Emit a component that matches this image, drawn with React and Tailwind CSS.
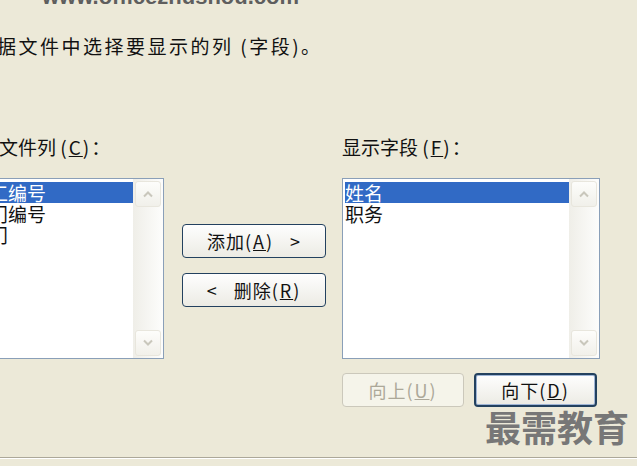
import React from 'react';

const cjk = "font-['Noto_Sans_CJK_SC','Noto_Sans',sans-serif]";

const leftItems = ['员工编号', '部门编号', '部门'];
const rightItems = ['姓名', '职务'];

function Chevron({ up }) {
  return (
    <svg width="12" height="8" viewBox="0 0 12 8" className="block">
      <path
        d={up ? 'M2 6.5 L6 2.5 L10 6.5' : 'M2 1.5 L6 5.5 L10 1.5'}
        fill="none"
        stroke="#c9c7bc"
        strokeWidth="2"
      />
    </svg>
  );
}

function ScrollBar() {
  return (
    <div className="flex w-[30px] flex-col justify-between bg-gradient-to-r from-[#efeee8] to-[#fdfdfc] p-[2px]">
      <div className="flex h-[26px] items-center justify-center rounded-[3px] border border-[#e8e6dd] bg-gradient-to-b from-[#fdfdfb] to-[#f1f0ea]">
        <Chevron up />
      </div>
      <div className="flex h-[26px] items-center justify-center rounded-[3px] border border-[#e8e6dd] bg-gradient-to-b from-[#fdfdfb] to-[#f1f0ea]">
        <Chevron />
      </div>
    </div>
  );
}

function ListBox({ items, selected, padClass }) {
  return (
    <div className="flex h-[181px] border border-[#8a9fb8] bg-white">
      <div className={`flex-1 overflow-hidden pt-[3px] ${padClass}`}>
        {items.map((item, i) => (
          <div
            key={item}
            className={`h-[21px] whitespace-nowrap text-[19px] leading-[21px] ${
              i === selected ? 'bg-[#316ac5] text-white' : 'text-[#111]'
            }`}
          >
            {item}
          </div>
        ))}
      </div>
      <ScrollBar />
    </div>
  );
}

function XpButton({ children, variant = 'normal', className = '' }) {
  const look = {
    normal: 'border-[#23415f] text-[#111] bg-gradient-to-b from-[#fefefe] to-[#ecebe4]',
    default: 'border-[#23415f] text-[#111] bg-gradient-to-b from-[#fefefe] to-[#ecebe4] shadow-[inset_0_0_0_1px_#9fb5d6]',
    disabled: 'border-[#cbc8bb] text-[#aca899] bg-[#f5f4ea]',
  }[variant];
  return (
    <div
      className={`flex h-[34px] items-center justify-center gap-[16px] rounded-[4px] border text-[18px] leading-none tracking-[1px] ${look} ${className}`}
    >
      {children}
    </div>
  );
}

function Key({ k }) {
  return (
    <span className="tracking-[2px]">
      (<span className="underline">{k}</span>)
    </span>
  );
}

export default function App() {
  return (
    <div className={`relative flex h-[466px] w-[637px] flex-col overflow-hidden bg-[#ece9d8] ${cjk}`}>
      <div className="ml-[42px] mt-[-14px] h-[22px] whitespace-nowrap font-['Liberation_Sans',sans-serif] text-[22px] font-bold leading-[22px] text-[#5e5e5e]">
        www.officezhushou.com
      </div>

      <div className="ml-[-3px] mt-[27px] whitespace-nowrap text-[19px] leading-[22px] tracking-[2.5px] text-[#111]">
        据文件中选择要显示的列 (字段)。
      </div>

      <div className="mt-[79px] flex">
        <div className="ml-[-60px] w-[224px] shrink-0">
          <div className="whitespace-nowrap pl-[59px] text-[19px] leading-[22px] text-[#111]">
            文件列 <Key k="C" />：
          </div>
          <div className="mt-[20px]">
            <ListBox items={leftItems} selected={0} padClass="pl-[29px]" />
          </div>
        </div>

        <div className="ml-[18px] flex w-[144px] shrink-0 flex-col">
          <XpButton className="mt-[88px]">
            <span>
              添加<Key k="A" />
            </span>
            <span>&gt;</span>
          </XpButton>
          <XpButton className="mt-[15px]">
            <span>&lt;</span>
            <span>
              删除<Key k="R" />
            </span>
          </XpButton>
        </div>

        <div className="ml-[16px] w-[258px] shrink-0">
          <div className="whitespace-nowrap text-[19px] leading-[22px] text-[#111]">
            显示字段 <Key k="F" />：
          </div>
          <div className="mt-[20px]">
            <ListBox items={rightItems} selected={0} padClass="pl-[2px]" />
          </div>
          <div className="mt-[14px] flex gap-[10px]">
            <XpButton variant="disabled" className="w-[122px]">
              <span>
                向上<Key k="U" />
              </span>
            </XpButton>
            <XpButton variant="default" className="w-[123px] border-2">
              <span>
                向下<Key k="D" />
              </span>
            </XpButton>
          </div>
        </div>
      </div>

      <div className="mb-[7px] mt-auto border-b border-t border-b-white border-t-[#aca899]" />

      <div className="absolute right-[8px] top-[408px] text-[36px] font-bold leading-[36px] text-[#777777]">
        最需教育
      </div>
    </div>
  );
}
